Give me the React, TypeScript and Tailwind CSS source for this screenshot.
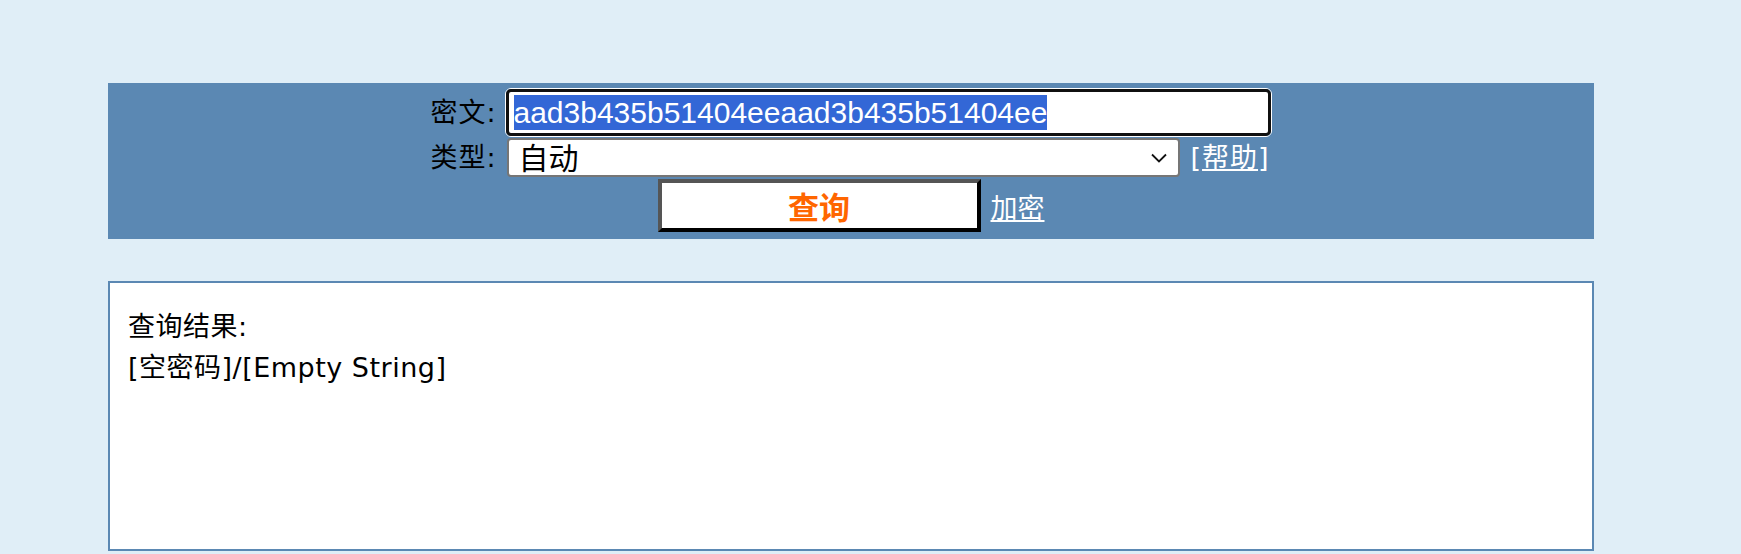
export default function App() {
  return (
    <div className="min-h-screen bg-[#e0eef7] pt-[83px] font-['DejaVu_Sans','Noto_Sans_CJK_SC',sans-serif] text-black">
      {/* query panel */}
      <div className="ml-[108px] h-[156px] w-[1486px] bg-[#5b88b3] pt-[5px]">
        <div className="mx-auto w-[841px]">
          <div className="flex h-[49px] items-center">
            <span className="w-[74px] text-[27px] leading-none tracking-[1px]">密文:</span>
            <div className="h-[49px] w-[767px] rounded-[6px] border border-white">
              <div className="flex h-full items-center rounded-[5px] border-[3px] border-[#101010] bg-white pl-[5px]">
                <span className="bg-[#3367d6] font-['Liberation_Sans',Arial,sans-serif] text-[30px] leading-[35px] text-white">
                  aad3b435b51404eeaad3b435b51404ee
                </span>
              </div>
            </div>
          </div>
          <div className="mt-px flex h-[39px] items-center">
            <span className="w-[76px] text-[27px] leading-none tracking-[1px]">类型:</span>
            <div className="flex h-[39px] w-[673px] items-center justify-between rounded-[4px] border-2 border-[#767676] bg-white pb-[3px] pl-[10px] pr-[11px]">
              <span className="font-['Noto_Sans_CJK_SC',sans-serif] text-[30px] leading-none">自动</span>
              <svg width="16" height="10" viewBox="0 0 16 10" fill="none" className="mt-[3px]">
                <polyline points="1,1.5 8,8.5 15,1.5" stroke="#111" strokeWidth="1.8" />
              </svg>
            </div>
            <span className="ml-[11px] text-[27px] leading-none tracking-[1px] text-white">
              [<a href="#" className="underline">帮助</a>]
            </span>
          </div>
        </div>
        <div className="mt-[2px] flex items-center justify-center gap-[10px]">
          <button className="h-[53px] w-[323px] border-4 border-t-[#555] border-l-[#555] border-r-black border-b-black bg-white font-['Noto_Sans_CJK_SC',sans-serif] text-[31px] font-bold leading-none text-[#ff6600]">
            查询
          </button>
          <a href="#" className="mt-[6px] text-[27px] leading-none text-white underline">
            加密
          </a>
        </div>
      </div>

      {/* result */}
      <div className="ml-[108px] mt-[42px] h-[270px] w-[1486px] border-2 border-[#5b88b3] bg-white px-[18px] pt-[23px] text-[27px] leading-[41px]">
        <div className="tracking-[0.5px]">查询结果:</div>
        <div className="tracking-[0.5px]">[空密码]/[Empty String]</div>
      </div>
    </div>
  );
}
